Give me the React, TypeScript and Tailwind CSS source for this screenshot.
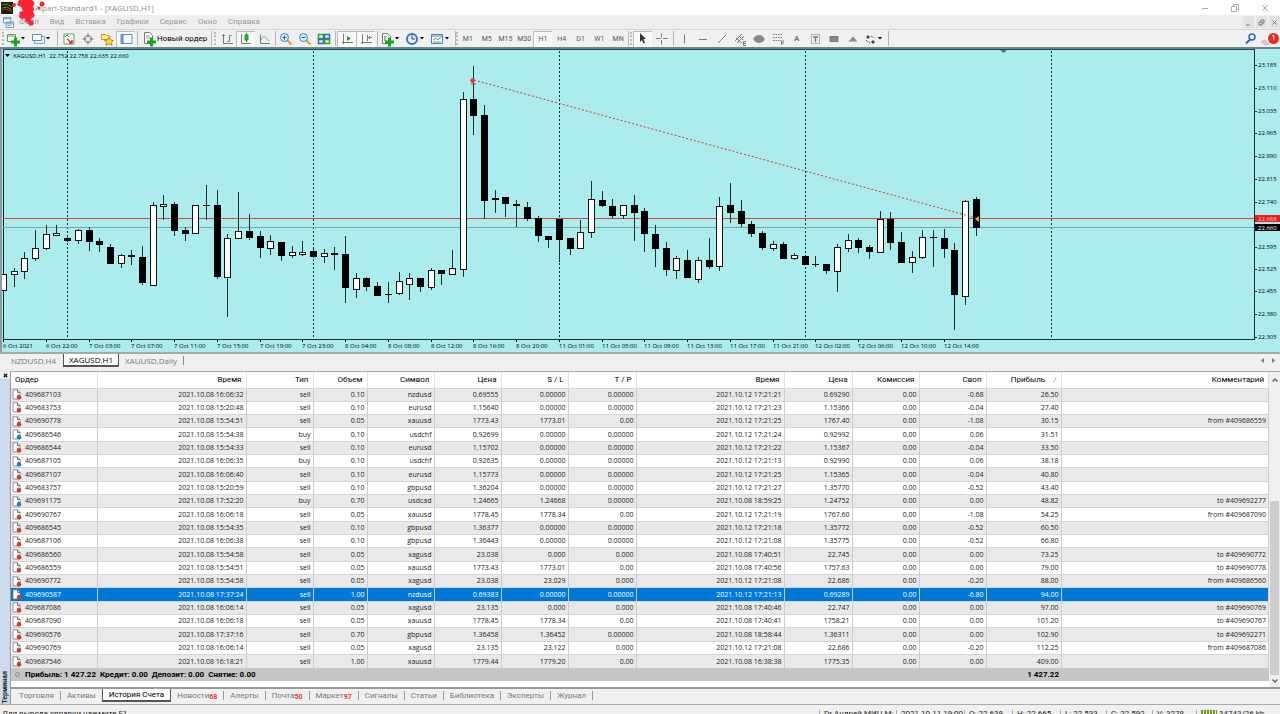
import type { ReactNode } from 'react';

type Candle = [high: number, top: number, bottom: number, low: number, up: 0 | 1];

const candles: Candle[] = [
  [274, 274, 290, 324, 1], [268, 271, 274, 287, 1], [252, 258, 271, 279, 1], [230, 248, 258, 261, 1],
  [225, 234, 248, 250, 1], [225, 233, 235, 235, 1], [235, 238, 241, 242, 0], [229, 230, 240, 244, 1],
  [227, 230, 242, 251, 0], [238, 241, 245, 252, 0], [244, 247, 264, 264, 0], [254, 255, 263, 268, 1],
  [250, 255, 257, 265, 0], [246, 257, 283, 285, 0], [202, 205, 285, 285, 1], [195, 204, 206, 220, 1],
  [202, 204, 231, 236, 0], [227, 230, 234, 241, 0], [205, 205, 233, 233, 1], [185, 205, 206, 220, 0],
  [190, 205, 277, 279, 0], [234, 238, 277, 317, 1], [192, 231, 238, 239, 1], [214, 231, 238, 240, 0],
  [231, 236, 248, 258, 0], [235, 241, 248, 255, 1], [242, 242, 256, 261, 0], [246, 252, 255, 258, 1],
  [241, 252, 254, 256, 1], [247, 251, 257, 258, 0], [249, 253, 256, 263, 1], [247, 253, 255, 270, 0],
  [236, 254, 288, 303, 0], [273, 278, 289, 298, 1], [277, 278, 287, 291, 0], [282, 286, 296, 296, 0],
  [282, 294, 295, 303, 0], [272, 281, 293, 295, 1], [273, 278, 284, 300, 1], [278, 278, 287, 292, 0],
  [268, 270, 287, 290, 1], [270, 270, 274, 285, 0], [250, 268, 274, 274, 1], [92, 99, 269, 277, 1],
  [66, 99, 116, 135, 0], [105, 115, 201, 219, 0], [190, 198, 200, 213, 0], [197, 197, 204, 217, 0],
  [200, 204, 206, 227, 0], [202, 207, 219, 221, 0], [216, 218, 236, 242, 0], [236, 236, 240, 248, 0],
  [219, 219, 240, 262, 0], [238, 238, 249, 255, 0], [220, 232, 248, 248, 1], [181, 199, 232, 238, 1],
  [191, 200, 206, 207, 0], [199, 206, 216, 218, 0], [205, 205, 215, 219, 1], [195, 205, 213, 241, 0],
  [208, 211, 234, 252, 0], [225, 234, 249, 267, 0], [242, 248, 270, 276, 0], [256, 258, 270, 279, 1],
  [250, 260, 278, 278, 0], [257, 260, 279, 283, 1], [238, 260, 267, 269, 0], [197, 206, 266, 271, 1],
  [183, 205, 213, 223, 0], [200, 211, 224, 227, 0], [221, 224, 234, 237, 0], [231, 233, 248, 250, 0],
  [241, 244, 248, 251, 1], [242, 244, 259, 259, 0], [253, 255, 258, 260, 1], [256, 256, 265, 265, 0],
  [256, 264, 265, 267, 0], [264, 264, 271, 274, 0], [244, 247, 271, 292, 1], [234, 240, 248, 252, 1],
  [238, 240, 248, 253, 0], [245, 247, 252, 259, 0], [211, 219, 252, 252, 1], [212, 219, 243, 250, 0],
  [232, 242, 263, 263, 0], [251, 257, 262, 273, 1], [230, 237, 257, 259, 1], [230, 237, 238, 267, 0],
  [229, 238, 249, 258, 0], [243, 250, 295, 330, 0], [200, 201, 296, 305, 1], [197, 199, 228, 236, 0],
];

const candleX = (i: number) => Math.round(3 + i * 10.69);

const timeLabels = [
  '6 Oct 2021', '6 Oct 22:00', '7 Oct 03:00', '7 Oct 07:00', '7 Oct 11:00', '7 Oct 15:00', '7 Oct 19:00', '7 Oct 23:00',
  '8 Oct 04:00', '8 Oct 08:00', '8 Oct 12:00', '8 Oct 16:00', '8 Oct 20:00', '11 Oct 01:00', '11 Oct 05:00', '11 Oct 09:00',
  '11 Oct 13:00', '11 Oct 17:00', '11 Oct 21:00', '12 Oct 02:00', '12 Oct 06:00', '12 Oct 10:00', '12 Oct 14:00',
];

const priceLabels: [number, string][] = [
  [65, '23.185'], [88, '23.110'], [111, '23.035'], [133, '22.965'], [156, '22.890'], [179, '22.815'], [202, '22.740'],
  [247, '22.595'], [269, '22.525'], [291, '22.455'], [314, '22.380'], [337, '22.305'],
];

const days = [67, 313, 559, 805, 1051];

// order, open time, type, volume, symbol, price, s/l, t/p, close time, price, commission, swap, profit, comment
const orders = `409687103|2021.10.08 16:06:32|sell|0.10|nzdusd|0.69555|0.00000|0.00000|2021.10.12 17:21:21|0.69290|0.00|-0.68|26.50|
409683753|2021.10.08 15:20:48|sell|0.10|eurusd|1.15640|0.00000|0.00000|2021.10.12 17:21:23|1.15366|0.00|-0.04|27.40|
409690778|2021.10.08 15:54:51|sell|0.05|xauusd|1773.43|1773.01|0.00|2021.10.12 17:21:25|1767.40|0.00|-1.08|30.15|from #409686559
409686546|2021.10.08 15:54:38|buy|0.10|usdchf|0.92699|0.00000|0.00000|2021.10.12 17:21:24|0.92992|0.00|0.06|31.51|
409686544|2021.10.08 15:54:33|sell|0.10|eurusd|1.15702|0.00000|0.00000|2021.10.12 17:21:22|1.15367|0.00|-0.04|33.50|
409687105|2021.10.08 16:06:35|buy|0.10|usdchf|0.92635|0.00000|0.00000|2021.10.12 17:21:13|0.92990|0.00|0.06|38.18|
409687107|2021.10.08 16:06:40|sell|0.10|eurusd|1.15773|0.00000|0.00000|2021.10.12 17:21:25|1.15365|0.00|-0.04|40.80|
409683757|2021.10.08 15:20:59|sell|0.10|gbpusd|1.36204|0.00000|0.00000|2021.10.12 17:21:27|1.35770|0.00|-0.52|43.40|
409691175|2021.10.08 17:52:20|buy|0.70|usdcad|1.24665|1.24668|0.00000|2021.10.08 18:59:25|1.24752|0.00|0.00|48.82|to #409692277
409690767|2021.10.08 16:06:18|sell|0.05|xauusd|1778.45|1778.34|0.00|2021.10.12 17:21:19|1767.60|0.00|-1.08|54.25|from #409687090
409686545|2021.10.08 15:54:35|sell|0.10|gbpusd|1.36377|0.00000|0.00000|2021.10.12 17:21:18|1.35772|0.00|-0.52|60.50|
409687106|2021.10.08 16:06:38|sell|0.10|gbpusd|1.36443|0.00000|0.00000|2021.10.12 17:21:08|1.35775|0.00|-0.52|66.80|
409686560|2021.10.08 15:54:58|sell|0.05|xagusd|23.038|0.000|0.000|2021.10.08 17:40:51|22.745|0.00|0.00|73.25|to #409690772
409686559|2021.10.08 15:54:51|sell|0.05|xauusd|1773.43|1773.01|0.00|2021.10.08 17:40:56|1757.63|0.00|0.00|79.00|to #409690778
409690772|2021.10.08 15:54:58|sell|0.05|xagusd|23.038|23.029|0.000|2021.10.12 17:21:08|22.686|0.00|-0.20|88.00|from #409686560
409690587|2021.10.08 17:37:24|sell|1.00|nzdusd|0.69383|0.00000|0.00000|2021.10.12 17:21:13|0.69289|0.00|-6.80|94.00|
409687086|2021.10.08 16:06:14|sell|0.05|xagusd|23.135|0.000|0.000|2021.10.08 17:40:46|22.747|0.00|0.00|97.00|to #409690769
409687090|2021.10.08 16:06:18|sell|0.05|xauusd|1778.45|1778.34|0.00|2021.10.08 17:40:41|1758.21|0.00|0.00|101.20|to #409690767
409690576|2021.10.08 17:37:16|sell|0.70|gbpusd|1.36458|1.36452|0.00000|2021.10.08 18:58:44|1.36311|0.00|0.00|102.90|to #409692271
409690769|2021.10.08 16:06:14|sell|0.05|xagusd|23.135|23.122|0.000|2021.10.12 17:21:08|22.686|0.00|-0.20|112.25|from #409687086
409687546|2021.10.08 16:18:21|sell|1.00|xauusd|1779.44|1779.20|0.00|2021.10.08 16:38:38|1775.35|0.00|0.00|409.00|`
  .split('\n')
  .map((line) => line.split('|'));

const headers = ['Ордер', 'Время', 'Тип', 'Объем', 'Символ', 'Цена', 'S / L', 'T / P', 'Время', 'Цена', 'Комиссия', 'Своп', 'Прибыль', 'Комментарий'];
const colWidths = [
  'w-[86px]', 'w-[149px]', 'w-[67px]', 'w-[54px]', 'w-[67px]', 'w-[67px]', 'w-[67px]',
  'w-[68px]', 'w-[148px]', 'w-[68px]', 'w-[67px]', 'w-[67px]', 'w-[75px]', 'w-auto',
];

const bottomTabs: { name: string; count?: number }[] = [
  { name: 'Торговля' }, { name: 'Активы' }, { name: 'История Счета' }, { name: 'Новости', count: 68 }, { name: 'Алерты' },
  { name: 'Почта', count: 50 }, { name: 'Маркет', count: 97 }, { name: 'Сигналы' }, { name: 'Статьи' }, { name: 'Библиотека' },
  { name: 'Эксперты' }, { name: 'Журнал' },
];

const Icon = ({ children }: { children: ReactNode }) => (
  <svg viewBox="0 0 16 16" className="h-4 w-4 shrink-0" fill="none" stroke="#777" aria-hidden="true">
    {children}
  </svg>
);

const Plus = () => <path d="M10.5 6.5v9M6 11h9" stroke="#17a51d" strokeWidth="3" />;

const Sep = ({ wide = false }: { wide?: boolean }) => (
  <span className={`flex h-[15px] justify-center ${wide ? 'w-1' : 'w-0.5'}`}>
    <span className="w-px bg-[#b5b5b5]" />
  </span>
);

const Grip = ({ wide = false }: { wide?: boolean }) => (
  <span className={`flex h-[13px] justify-center ${wide ? 'w-1' : 'w-0.5'}`}>
    <span className="border-l-2 border-dotted border-[#bbb]" />
  </span>
);

const Tool = ({ label, pressed = false, children }: { label: string; pressed?: boolean; children: ReactNode }) => (
  <button
    type="button"
    aria-label={label}
    className={`flex h-4 w-[19px] items-center justify-center ${pressed ? 'border-l border-t border-[#bbb] bg-[#f9f9f9]' : ''}`}
  >
    <Icon>{children}</Icon>
  </button>
);

const DropTool = ({ label, children }: { label: string; children: ReactNode }) => (
  <button type="button" aria-label={label} className="flex h-4 w-[25px] items-center">
    <Icon>{children}</Icon>
    <svg viewBox="0 0 4 3" className="h-[3px] w-1" aria-hidden="true"><path d="M0 0h4L2 2.5z" /></svg>
  </button>
);

const TitleBar = () => (
  <header className="relative flex h-[15px] shrink-0 items-center bg-white text-[#8c8c8c]">
    <svg viewBox="0 0 12 12" className="ml-px h-3 w-3" aria-hidden="true">
      <rect width="12" height="12" fill="#1c1d10" />
      <path d="M1 3l5-1 5 3M1 6l5-1 5 3" stroke="#5e8c20" fill="none" />
      <path d="M1 8l4-1 6 3" stroke="#b52a20" fill="none" />
    </svg>
    <h1 className="ml-[22px] font-['Open_Sans',sans-serif] text-[8px]">Alpari-Standard1 - [XAGUSD,H1]</h1>
    <div className="ml-auto flex">
      <button type="button" aria-label="Свернуть" className="flex h-[15px] w-[31px] items-center justify-center">
        <svg viewBox="0 0 8 8" className="h-2 w-2" stroke="#aaa" fill="none"><path d="M1 4.5h6" /></svg>
      </button>
      <button type="button" aria-label="Развернуть" className="flex h-[15px] w-[30px] items-center justify-center">
        <svg viewBox="0 0 8 8" className="h-2 w-2" stroke="#aaa" fill="none"><path d="M.5 2.5h5v5h-5zM2.5 2.5v-2h5v5h-2" /></svg>
      </button>
      <button type="button" aria-label="Закрыть" className="flex h-[15px] w-[30px] items-center justify-center">
        <svg viewBox="0 0 8 8" className="h-2 w-2" stroke="#aaa" fill="none"><path d="M1 1l6 6M7 1L1 7" /></svg>
      </button>
    </div>
    <svg viewBox="0 0 48 28" className="absolute left-0 top-0 z-10 h-7 w-12" fill="#fb2436" aria-hidden="true">
      <path d="M19 0h13l3 3-2 3 1 3-1 4 1 3-3 3-5 1-3-3-3-2-1-3 4-1-2-4-4-2z" />
      <circle cx="14" cy="5" r="2" /><circle cx="42" cy="4" r="2.5" /><circle cx="39" cy="8" r="1.2" />
      <circle cx="21" cy="3" r="3" /><circle cx="22" cy="16" r="2.8" /><circle cx="28" cy="20" r="2.8" />
      <circle cx="31" cy="23" r="2.6" /><circle cx="32" cy="15" r="2.6" />
    </svg>
  </header>
);

const menu = ['Файл', 'Вид', 'Вставка', 'Графики', 'Сервис', 'Окно', 'Справка'];

const MenuBar = () => (
  <nav className="flex h-[14px] shrink-0 items-center bg-[#eee] text-[8px] text-[#999]">
    <svg viewBox="0 0 12 12" className="ml-[3px] h-[11px] w-[11px]" stroke="#5b8fc4" fill="#fff" aria-hidden="true">
      <path d="M.5 .5h8v6h-8zM3.5 5.5h8v6h-8z" /><path d="M.5 2h8M4 7.5h7M5 9.5h4" />
    </svg>
    <div className="ml-[5px] flex gap-[11px]">
      {menu.map((item) => <button type="button" key={item}>{item}</button>)}
    </div>
    <div className="ml-auto flex gap-0.5">
      {[['Свернуть окно', 'M1 6h4'], ['Восстановить окно', 'M1 3h3v3H1zM3 3V1h3v3H4'], ['Закрыть окно', 'M1.5 1.5l4 4M5.5 1.5l-4 4']].map(([label, d]) => (
        <button type="button" key={label} aria-label={label} className="flex h-3 w-[11px] items-center justify-center bg-[#e2e2e2]">
          <svg viewBox="0 0 7 7" className="h-[7px] w-[7px]" stroke="#777" fill="none"><path d={d} /></svg>
        </button>
      ))}
    </div>
  </nav>
);

const Toolbar = () => (
  <div className="flex h-[18px] shrink-0 items-center overflow-hidden border-t border-[#d4d4d4] bg-[#f0f0f0]">
    <span className="flex w-[5px] justify-center"><Grip /></span>
    <DropTool label="Новый график"><path d="M2.5 3.5h8v7h-8zM2 5h9" stroke="#5a9f5a" fill="#fff" /><Plus /></DropTool>
    <DropTool label="Профили"><path d="M4.5 5.5h10v7h-10z" stroke="#7fa6cf" fill="#e4effa" /><path d="M2.5 3.5h9v6h-9z" stroke="#5c8dc2" fill="#fff" /></DropTool>
    <Sep wide />
    <Tool label="Обзор рынка"><path d="M3 3h10v10H3z" stroke="#6b9b6b" fill="#fff" /><path d="M4 6l2-2 2 2" stroke="#2a2" /><path d="M6 8l5 4M11 9v3H8" stroke="#d33" strokeWidth="1.5" /></Tool>
    <Tool label="Окно данных"><circle cx="8" cy="8" r="3.5" /><path d="M8 2.5v4M8 9.5v4M2.5 8h4M9.5 8h4" /></Tool>
    <Tool label="Навигатор"><path d="M2.5 5.5v-2h4l1 1h3v4h-8z" fill="#ffe680" stroke="#c89b20" /><path d="M10 6l1.5 3 3 .4-2 2 .5 3-3-1.5-3 1.5.5-3-2-2 3-.4z" fill="#fbd648" stroke="#b98a14" /></Tool>
    <Tool label="Терминал" pressed><path d="M3 3.5h11v9H3z" stroke="#4e86c6" fill="#fff" /><path d="M4.5 4v8" stroke="#4e86c6" strokeWidth="2" /></Tool>
    <Sep wide />
    <button type="button" className="flex h-4 w-[70px] items-center pl-0.5 text-[8px] whitespace-nowrap">
      <Icon><path d="M3.5 1.5h5l3 3v8h-8z" fill="#fff" stroke="#777" /><path d="M5 5h4M5 7h4" stroke="#999" /><Plus /></Icon>
      Новый ордер
    </button>
    <Sep wide />
    <Grip wide />
    <Tool label="Бары"><path d="M4.5 3v9.5H14M3 4.5h3M8.5 10.5h2V4.500h2" stroke="#6f7f6f" /></Tool>
    <Tool label="Свечи" pressed><path d="M3.5 3v9.5H13" /><path d="M8.5 2v9" stroke="#159a15" /><path d="M7 4h3v5H7z" fill="#2bc02b" stroke="#159a15" /></Tool>
    <Tool label="Линия"><path d="M3.5 3.5v9H13" /><path d="M4 9c2-5 4-4 8 1" stroke="#5fae5f" /></Tool>
    <Sep />
    <Tool label="Увеличить"><path d="M9.5 9.5l4 4" stroke="#d6a829" strokeWidth="2.2" /><circle cx="6.5" cy="6.5" r="4" fill="#d9ebff" stroke="#3f7fd0" /><path d="M4.5 6.5h4M6.5 4.5v4" stroke="#2d66b5" /></Tool>
    <Tool label="Уменьшить"><path d="M9.5 9.5l4 4" stroke="#d6a829" strokeWidth="2.2" /><circle cx="6.5" cy="6.5" r="4" fill="#d9ebff" stroke="#3f7fd0" /><path d="M4.5 6.5h4" stroke="#2d66b5" /></Tool>
    <Tool label="Окна рядом"><path d="M2.500 3.5h5v4h-5zM8.500 8.500h5v4h-5z" stroke="#3c9c2d" fill="#e6ffd9" strokeWidth="1.500" /><path d="M8.500 3.5h5v4h-5zM2.500 8.500h5v4h-5z" stroke="#2f6bb8" fill="#e6f1ff" strokeWidth="1.500" /></Tool>
    <Sep wide />
    <Tool label="Автопрокрутка" pressed><path d="M4.5 3v10M3 11.5h11" /><path d="M8 5l4 2.5L8 10z" fill="#2a9a2a" stroke="none" /></Tool>
    <Tool label="Сдвиг графика" pressed><path d="M4.5 3v10M3 11.5h11M9.5 4v6M14 6.5h-3M12 5l-1.5 1.5L12 8" /></Tool>
    <Sep wide />
    <DropTool label="Индикаторы"><path d="M3.5 2.5h5l3 3v7h-8z" fill="#fff" stroke="#777" /><path d="M6 5v5" stroke="#555" /><Plus /></DropTool>
    <DropTool label="Периоды"><circle cx="8" cy="8" r="5" fill="#eaf4ff" stroke="#2f78c8" strokeWidth="2" /><path d="M8 4.5V8h3" stroke="#335" /></DropTool>
    <DropTool label="Шаблоны"><path d="M2.5 3.5h11v9h-11z" fill="#fff" stroke="#4a7fc0" /><path d="M3 5h10" stroke="#4a7fc0" /><path d="M4 9l2-1.5 3 1 3-2M4 11h8" stroke="#5aa85a" /></DropTool>
    <Sep />
    <Grip />
    <div className="flex w-[169px] text-[7px] text-[#555]">
      {['M1', 'M5', 'M15', 'M30', 'H1', 'H4', 'D1', 'W1', 'MN'].map((tf) => (
        <button type="button" key={tf} className={`h-4 flex-1 border-l border-t ${tf === 'H1' ? 'border-[#bbb] bg-[#f9f9f9]' : 'border-transparent'}`}>{tf}</button>
      ))}
    </div>
    <Sep />
    <Grip wide />
    <Tool label="Курсор" pressed><path d="M5 2l6 6H8.5l1.5 4-1.5.5L7 9l-2 2z" fill="#333" stroke="none" /></Tool>
    <Tool label="Перекрестие"><path d="M7.5 2.5v4M7.5 9v4.5M2 7.5h4.5M9 7.5h4.5" /></Tool>
    <Sep wide />
    <div className="flex w-[187px] justify-between">
      <Tool label="Вертикальная линия"><path d="M8.5 3.5v9" /></Tool>
      <Tool label="Горизонтальная линия"><path d="M4 8.5h8" /></Tool>
      <Tool label="Трендовая линия"><path d="M4 12l8-8" /></Tool>
      <Tool label="Канал"><path d="M3 10l7-7M5 12l7-7M4 7l6 5M7 5l4 4" /><path d="M14 10.5h-2.5v4H14M11.5 12.5H14" /></Tool>
      <Tool label="Эллипс"><ellipse cx="8" cy="8" rx="5" ry="3.3" fill="#8a8a8a" /></Tool>
      <Tool label="Фибоначчи"><path d="M3 3.5h10M3 6.5h10M3 9.5h8" strokeDasharray="1.5 1" /><path d="M11.5 14v-4H14M11.5 12H14" /></Tool>
      <button type="button" aria-label="Текст" className="h-4 w-[19px] text-[8px] font-bold text-[#777]">A</button>
      <Tool label="Метка"><path d="M4.5 3.5h8v9h-8z" strokeDasharray="1 1" /><path d="M6 6h5M8.5 6v5" strokeWidth="1.5" /></Tool>
      <Tool label="Прямоугольник"><path d="M4 5.5h8v5H4z" fill="#8a8a8a" /></Tool>
      <Tool label="Треугольник"><path d="M8 5.5l4.5 5h-9z" fill="#8a8a8a" stroke="none" /></Tool>
    </div>
    <DropTool label="Стрелки"><path d="M4 6l2-2 2 2-2 2zM9 11l2-2 2 2-2 2z" fill="#444" stroke="none" /><path d="M4 9l4 3M9 5l3 2" stroke="#555" strokeDasharray="2 1" /></DropTool>
    <Sep />
    <div className="ml-auto flex pr-px">
      <Tool label="Поиск"><circle cx="9" cy="6" r="3" stroke="#3565b0" strokeWidth="1.5" fill="#dcebff" /><path d="M7 8.5L3 12.5" stroke="#3565b0" strokeWidth="1.8" /></Tool>
      <button type="button" aria-label="Уведомления" className="relative h-4 w-[19px]">
        <Icon><path d="M1 11l4-2 4 4-3 1z" fill="#d5d5e0" stroke="#b5b5c5" /></Icon>
        <span className="absolute right-0 top-0.5 flex h-[11px] w-[11px] items-center justify-center rounded-full bg-[#e0301e] text-[8px] text-white">1</span>
      </button>
    </div>
  </div>
);

const Chart = () => (
  <section className="flex h-[307px] shrink-0 border-b-2 border-t-2 border-b-[#a4a9a9] border-t-[#70878a] bg-[#adecec] font-['Open_Sans',sans-serif] text-[6px]">
    <svg className="h-[303px] min-w-0 flex-1" role="img" aria-label="XAGUSD,H1">
      <g transform="translate(0 -49)" shapeRendering="crispEdges">
        <rect x="0" y="49" width="2" height="310" fill="#909c9c" />
        <path d="M3.5 49.5V339" stroke="#123" />
        <rect x="3" y="49" width="100%" height="1" fill="#1f4a50" />
        <rect x="3" y="339" width="100%" height="1" fill="#0c3033" />
        {days.map((x) => <line key={x} x1={x + 0.5} x2={x + 0.5} y1="51" y2="339" stroke="#0c3033" strokeDasharray="2 2" />)}
        <rect x="3" y="218" width="100%" height="1" fill="#e0403c" />
        <rect x="3" y="227" width="100%" height="1" fill="#7ba5a5" />
        {candles.map(([high, top, bottom, low, up], i) => (
          <g key={i}>
            <rect x={candleX(i)} y={high} width="1" height={low - high} fill="#16302f" />
            {up
              ? <rect x={candleX(i) - 2.5} y={top + 0.5} width="6" height={bottom - top} fill="#fff" stroke="#111" />
              : <rect x={candleX(i) - 3} y={top} width="7" height={bottom - top} fill="#000" />}
          </g>
        ))}
        <rect x="0" y="270" width="2" height="25" fill="#909c9c" />
        {timeLabels.map((label, i) => <rect key={label} x={candleX(i * 4)} y="340" width="1" height="2" />)}
      </g>
      <g transform="translate(0 -49)">
        <path d="M474 80L976 218" stroke="#d03434" strokeDasharray="2 2" fill="none" />
        <circle cx="472.5" cy="80.5" r="2.2" fill="#f03030" />
        <path d="M471 84h5" stroke="#e03030" />
        <path d="M979 216v6l-4-3z" fill="#f0a860" />
        <path d="M1000 50h7l-3.5 3z" fill="#3f7478" />
        <path d="M5 54h5l-2.5 3z" />
        <text x="13" y="58">XAGUSD,H1&nbsp; 22.752 22.758 22.635 22.660</text>
        {timeLabels.map((label, i) => <text key={label} x={candleX(i * 4)} y="348">{label}</text>)}
      </g>
    </svg>
    <svg className="h-[303px] w-[26px] shrink-0" role="img" aria-label="Шкала цен">
      <g transform="translate(0 -49)">
        <path d="M.5 49v291" stroke="#0c3033" />
        {priceLabels.map(([y, label]) => (
          <g key={label}>
            <rect x="0" y={y} width="3" height="1" fill="#0c3033" />
            <text x="4" y={y + 2}>{label}</text>
          </g>
        ))}
        <rect x="1" y="215" width="25" height="7" fill="#e81c1c" />
        <rect x="1" y="224" width="25" height="7" fill="#000" />
        <text x="4" y="221" fill="#ffd0d0">22.688</text>
        <text x="4" y="230" fill="#fff">22.660</text>
      </g>
    </svg>
  </section>
);

const ChartTabs = () => (
  <div className="flex h-[17px] shrink-0 items-start bg-[#f0f0f0] font-['Open_Sans',sans-serif] text-[8px] text-[#777]">
    <button type="button" className="h-[13px] w-[63px] pl-1">NZDUSD,H4</button>
    <button type="button" className="h-[13px] w-[56px] border-x border-b-2 border-[#555] bg-white text-black">XAGUSD,H1</button>
    <button type="button" className="h-[13px] w-[64px]">XAUUSD,Daily</button>
    <span className="mt-0.5 h-[9px] w-px bg-[#888]" />
    <div className="ml-auto flex gap-2 pr-1 pt-0.5">
      <svg viewBox="0 0 4 8" className="h-2 w-1" fill="#777"><path d="M4 2v5L1 4.5z" /></svg>
      <svg viewBox="0 0 4 8" className="h-2 w-1" fill="#777"><path d="M0 2v5l3-2.5z" /></svg>
    </div>
  </div>
);

const OrderIcon = ({ buy }: { buy: boolean }) => (
  <svg viewBox="0 0 10 11" className="h-[11px] w-[10px] shrink-0" aria-hidden="true">
    <path d="M1 .8h4.5l2.5 2.5v6.7H1z" fill="#fff" stroke="#777" strokeWidth=".8" />
    <path d="M5.5 1v2.5H8" fill="none" stroke="#555" strokeWidth=".8" />
    <path d="M6.5 5l3 4.5h-5z" fill={buy ? '#5a9fc8' : '#c87060'} />
    <circle cx="7" cy="8.3" r="2.2" fill={buy ? '#1c7fc4' : '#d63a28'} />
  </svg>
);

const History = () => (
  <table className="h-[309px] w-full table-fixed border-collapse text-right font-['Open_Sans',sans-serif] text-[7px] leading-[12px] whitespace-nowrap text-[#222]">
    <colgroup>
      {colWidths.map((w, i) => <col key={i} className={w} />)}
    </colgroup>
    <thead>
      <tr className="h-4 bg-white font-['Roboto',sans-serif] text-black">
        {headers.map((h, i) => (
          <th key={i} scope="col" className={`border-r border-[#e2e2e2] py-0 pl-1 pr-1 text-[8px] font-normal ${i === 0 ? 'text-left' : ''}`}>
            {h}
            {h === 'Прибыль' && <span className="pl-2 text-[#888]">/</span>}
          </th>
        ))}
      </tr>
    </thead>
    <tbody>
      {orders.map((row) => {
        const selected = row[0] === '409690587';
        return (
          <tr key={row[0]} className={`h-[13px] border-t border-[#d5d5d5] ${selected ? 'bg-[#0078d7] text-white' : 'odd:bg-[#e9e9e9] even:bg-white'}`}>
            {row.map((cell, i) => (
              <td key={i} className={`border-r border-[#ccc] py-0 ${i === 0 ? 'pl-px text-left' : 'pr-0.5'}`}>
                {i === 0
                  ? <span className="flex items-center gap-[3px]"><OrderIcon buy={row[2] === 'buy'} />{cell}</span>
                  : cell}
              </td>
            ))}
          </tr>
        );
      })}
    </tbody>
    <tfoot>
      <tr className="h-[13px] bg-[#c6c6c6] font-['Roboto',sans-serif] text-[8px] font-bold text-black">
        <td colSpan={12} className="py-0 text-left">
          <span className="flex items-center pl-1">
            <span className="mr-[5px] h-[5px] w-[5px] rounded-full border border-[#888]" />
            Прибыль: 1 427.22&nbsp; Кредит: 0.00&nbsp; Депозит: 0.00&nbsp; Снятие: 0.00
          </span>
        </td>
        <td className="py-0 pr-0.5">1 427.22</td>
        <td />
      </tr>
    </tfoot>
  </table>
);

const Terminal = () => (
  <section className="flex shrink-0">
    <aside className="flex w-[11px] shrink-0 flex-col items-center justify-between border-r border-[#999] bg-[#ccdcea]">
      <button type="button" aria-label="Закрыть терминал" className="flex h-2 w-full items-center justify-center bg-[#f0f0f0]">
        <svg viewBox="0 0 6 6" className="h-[5px] w-[5px]" stroke="#000" strokeWidth="1.5"><path d="M1 1l4 4M5 1L1 5" /></svg>
      </button>
      <span className="rotate-180 text-[7px] leading-[10px] font-bold text-[#222] [writing-mode:vertical-rl]">Терминал</span>
    </aside>
    <div className="min-w-0 flex-1">
      <div className="flex h-[318px] border-b-2 border-t border-b-[#999] border-t-[#aaa] bg-white">
        <div className="min-w-0 flex-1"><History /></div>
        <div className="flex w-[11px] shrink-0 flex-col items-center bg-[#f0f0f0]">
          <svg viewBox="0 0 8 8" className="my-1 h-2 w-2 shrink-0" stroke="#666" fill="none" strokeWidth="1.5"><path d="M1.5 5.5L4 3l2.5 2.5" /></svg>
          <span className="mt-auto h-[174px] w-[9px] bg-[#cdcdcd]" />
          <svg viewBox="0 0 8 8" className="my-0.5 h-2 w-2 shrink-0" stroke="#666" fill="none" strokeWidth="1.5"><path d="M1.5 2.5L4 5l2.5-2.5" /></svg>
        </div>
      </div>
      <div className="flex h-[15px] items-start bg-[#f0f0f0] pl-0.5 text-[8px] leading-[12px] text-[#777]">
        {bottomTabs.map(({ name, count }) => {
          const active = name === 'История Счета';
          return (
            <div key={name} className="flex items-center">
              <button type="button" className={`flex h-[13px] items-center whitespace-nowrap px-1.5 ${active ? 'border-x border-b-2 border-[#555] bg-white text-black' : ''}`}>
                {name}
                {count && <sub className="text-[7px] font-bold text-[#e33]">{count}</sub>}
              </button>
              {!active && name !== 'Активы' && <span className="h-[9px] w-px bg-[#999]" />}
            </div>
          );
        })}
      </div>
    </div>
  </section>
);

const StatusBar = () => (
  <footer className="flex h-[18px] shrink-0 items-center border-t border-[#aaa] bg-[#f0f0f0] pl-0.5 text-[8px] whitespace-nowrap text-[#222]">
    <span>Для вывода справки нажмите F1</span>
    <div className="ml-auto flex">
      <span className="w-[77px] overflow-hidden border-l border-[#aaa] pl-1">Dr Андрей МИЦ.М:</span>
      <span className="w-[68px] border-l border-[#aaa] pl-1">2021.10.11 19:00</span>
      <span className="w-[48px] border-l border-[#aaa] pl-1">O: 22.638</span>
      <span className="w-[48px] border-l border-[#aaa] pl-1">H: 22.665</span>
      <span className="w-[46px] border-l border-[#aaa] pl-1">L: 22.533</span>
      <span className="w-[46px] border-l border-[#aaa] pl-1">C: 22.592</span>
      <span className="w-[44px] border-l border-[#aaa] pl-1">V: 3278</span>
      <span className="flex w-[84px] items-center gap-0.5 border-l border-[#aaa] pl-1">
        <svg viewBox="0 0 16 8" className="h-2 w-4" aria-hidden="true"><path d="M0 4h16" stroke="#6b9a1c" strokeWidth="8" strokeDasharray="2 1" /></svg>
        34743/26 kb
      </span>
    </div>
  </footer>
);

export default function App() {
  return (
    <div className="flex h-screen flex-col overflow-hidden bg-[#f0f0f0] font-['Roboto','Noto_Sans',sans-serif] leading-none">
      <TitleBar />
      <MenuBar />
      <Toolbar />
      <Chart />
      <ChartTabs />
      <Terminal />
      <StatusBar />
    </div>
  );
}
